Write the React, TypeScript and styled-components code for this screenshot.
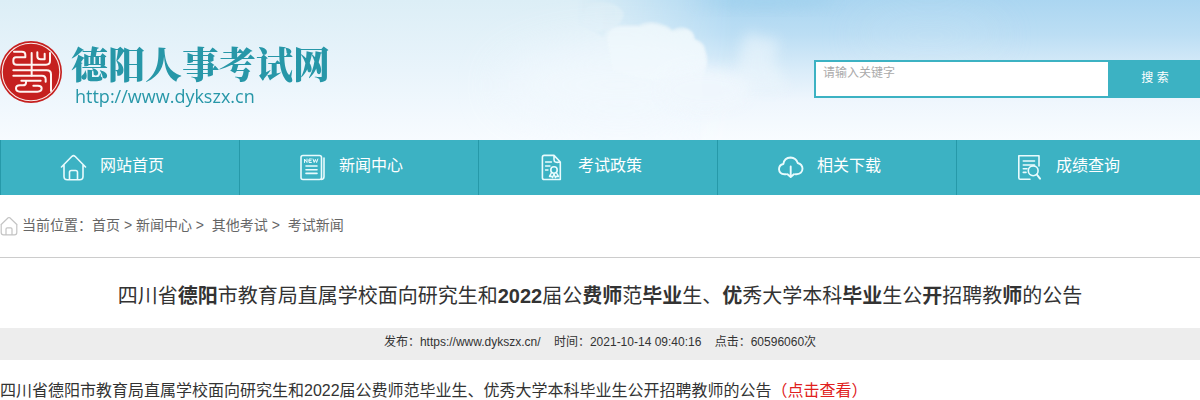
import React from "react";
import styled, { createGlobalStyle } from "styled-components";

const teal = "#3cb2c3";

const GlobalStyle = createGlobalStyle`
  *, *::before, *::after { box-sizing: border-box; }
  body {
    margin: 0;
    background: #fff;
    color: #333;
    font-family: "Liberation Sans", "Noto Sans CJK SC", sans-serif;
    font-size: 12px;
  }
  a { color: inherit; text-decoration: none; }
`;

const Header = styled.header`
  position: relative;
  display: flex;
  justify-content: space-between;
  align-items: flex-start;
  height: 140px;
  overflow: hidden;
  background: #eef6fc;
`;

const SkyArt = styled.svg`
  position: absolute;
  inset: 0;
  width: 100%;
  height: 100%;
`;

const Brand = styled.a`
  position: relative;
  display: flex;
  align-items: flex-start;
  gap: 8px;
  padding-top: 40px;
  color: #2797a8;
`;

const BrandText = styled.span`
  display: flex;
  flex-direction: column;
  padding-top: 1px;
`;

const BrandName = styled.strong`
  font-family: "Noto Serif CJK SC", "Noto Sans CJK SC", serif;
  font-size: 37px;
  font-weight: 900;
  line-height: 44px;
  white-space: nowrap;
`;

const BrandUrl = styled.span`
  padding-left: 4px;
  font-family: "Open Sans", "Noto Sans", sans-serif;
  font-size: 18px;
  line-height: 22px;
`;

const SearchForm = styled.form`
  position: relative;
  display: flex;
  width: 386px;
  height: 38px;
  margin-top: 60px;
  border: 2px solid ${teal};
  border-right: 0;
`;

const SearchInput = styled.input`
  flex: 1;
  min-width: 0;
  border: 0;
  border-radius: 0;
  outline: 0;
  padding: 0 7px 12px;
  background: #fff;
  font: 12px "Liberation Sans", "Noto Sans CJK SC", sans-serif;
  &::placeholder { color: #aaa; opacity: 1; }
`;

const SearchButton = styled.button`
  width: 92px;
  border: 0;
  padding: 0 0 6px 2px;
  background: ${teal};
  color: #fff;
  font: 12px "Liberation Sans", "Noto Sans CJK SC", sans-serif;
`;

const Nav = styled.nav`
  display: grid;
  grid-template-columns: repeat(5, 1fr);
  height: 55px;
  padding-right: 5px;
  background: ${teal};
`;

const NavLink = styled.a`
  display: flex;
  align-items: center;
  gap: 13px;
  padding-left: 59px;
  border-left: 1px solid #2699a9;
  color: #fff;
  font-size: 16px;
`;

const NavIcon = styled.svg`
  flex: none;
  width: 27px;
  height: 27px;
  fill: none;
  stroke: #e9fbfd;
  stroke-width: 1.6;
  stroke-linecap: round;
  stroke-linejoin: round;
`;

const NavLabel = styled.span`
  line-height: 24px;
  padding-bottom: 4px;
`;

const Breadcrumb = styled.nav`
  display: flex;
  align-items: center;
  gap: 4px;
  height: 63px;
  border-bottom: 1px solid #ccc;
  color: #666;
  font-size: 14px;
`;

const CrumbIcon = styled.svg`
  flex: none;
  width: 18px;
  height: 20px;
  fill: none;
  stroke: #c4c4c4;
  stroke-width: 1.2;
  stroke-linejoin: round;
`;

const CrumbTrail = styled.span`
  padding-bottom: 5px;
`;

const Title = styled.h1`
  margin: 0;
  padding: 21px 0 15px;
  font-size: 20px;
  font-weight: 400;
  line-height: 34px;
  text-align: center;
`;

const Meta = styled.p`
  margin: 0;
  height: 32px;
  background: #ededed;
  line-height: 28px;
  text-align: center;
`;

const Body = styled.p`
  margin: 0;
  padding-top: 19px;
  font-size: 16px;
  line-height: 24px;
`;

const MoreLink = styled.a`
  && { color: #e02020; }
`;

function Sky() {
  return (
    <SkyArt viewBox="0 0 1200 140" preserveAspectRatio="none" aria-hidden="true">
      <defs>
        <linearGradient id="base" x1="0" y1="0" x2="0" y2="1">
          <stop offset="0" stopColor="#dceef6" />
          <stop offset="0.5" stopColor="#e9f4fb" />
          <stop offset="1" stopColor="#f7fbff" />
        </linearGradient>
        <linearGradient id="blue" x1="0" y1="0" x2="0" y2="1">
          <stop offset="0" stopColor="#abd6f1" />
          <stop offset="0.25" stopColor="#bcdef4" />
          <stop offset="0.5" stopColor="#d9ecf9" />
          <stop offset="0.72" stopColor="#eff6fd" />
          <stop offset="1" stopColor="#f8fcff" />
        </linearGradient>
        <linearGradient id="fade" x1="0" y1="0" x2="1" y2="0">
          <stop offset="0.48" stopColor="#000" />
          <stop offset="0.61" stopColor="#fff" />
        </linearGradient>
        <filter id="soft" x="-40%" y="-40%" width="180%" height="180%"><feGaussianBlur stdDeviation="7" /></filter>
        <filter id="haze" x="-60%" y="-60%" width="220%" height="220%"><feGaussianBlur stdDeviation="22" /></filter>
        <filter id="edge" x="-10%" y="-10%" width="120%" height="120%"><feGaussianBlur stdDeviation="1.2" /></filter>
        <mask id="openSky">
          <rect width="1200" height="140" fill="url(#fade)" />
          <path d="M520 20Q570 14 603 37Q606 26 618 25Q630 25 639 25Q644 22 651 22Q658 22 664 25Q669 26 672 30Q679 26 686 28Q694 30 695 39Q705 42 706 52Q710 64 703 76L700 160H480Z" fill="#000" filter="url(#edge)" />
          <path d="M586 8Q592 1 606 3Q620 4 624 14Q622 24 612 28Q594 36 582 24Z" fill="#000" opacity="0.75" filter="url(#edge)" />
        </mask>
      </defs>
      <rect width="1200" height="140" fill="url(#base)" />
      <ellipse cx="620" cy="85" rx="120" ry="40" fill="#f3f9fe" opacity="0.7" filter="url(#haze)" />
      <g mask="url(#openSky)">
        <rect width="1200" height="140" fill="url(#blue)" />
        <ellipse cx="765" cy="0" rx="70" ry="9" fill="#9ccfec" opacity="0.6" filter="url(#soft)" />
      </g>
      <path d="M607 40Q608 28 618 27H640L651 24 664 27 672 32 686 30Q693 32 694 40Q703 44 704 52Q707 66 700 72Q655 88 612 70Z" fill="#f2f9fd" opacity="0.55" filter="url(#edge)" />
      <ellipse cx="705" cy="90" rx="46" ry="22" fill="#f0f7fd" opacity="0.9" filter="url(#soft)" />
      <path d="M742 44Q747 28 756 34Q764 42 776 36Q781 50 773 60Q780 74 790 90H732Q738 66 742 44Z" fill="#edf6fc" opacity="0.6" filter="url(#soft)" />
      <ellipse cx="930" cy="36" rx="75" ry="24" fill="#d6ebf8" opacity="0.2" filter="url(#haze)" />
    </SkyArt>
  );
}

function Seal() {
  return (
    <svg width="63" height="64" viewBox="0 0 63 64" aria-hidden="true">
      <circle cx="31" cy="32" r="31" fill="#c5201f" />
      <circle cx="31" cy="32" r="28.8" fill="none" stroke="#fbeae8" strokeWidth="1.1" />
      <g transform="translate(0 -9) scale(0.3333)" fill="none" stroke="#fff4f2" strokeWidth="6" strokeLinecap="round" strokeLinejoin="round">
        <path d="M42 62H66Q76 62 76 71V79H48Q40 79 40 88V92Q40 101 50 101H138Q150 101 150 90V66" />
        <path d="M95 66V134M112 64V76Q112 85 122 85H134V68" />
        <path d="M40 118H140Q153 118 153 130V180" />
        <path d="M40 134H126Q137 134 137 145V152" />
        <path d="M64 149H122M78 149V155Q78 163 68 163H60Q48 163 48 172Q48 182 60 182H112Q125 182 125 172Q125 164 114 164H100" />
      </g>
    </svg>
  );
}

const icons = {
  home: <path d="M1.5 13 12 2.3Q13.5 1 15 2.3L25.5 13M4 11V22.5Q4 25.8 7.3 25.8H19.7Q23 25.8 23 22.5V11M9.5 25.5V18.3Q9.5 16.5 11.3 16.5H15.7Q17.5 16.5 17.5 18.3V25.5" />,
  news: (
    <>
      <rect x="2" y="1.5" width="20.5" height="24" rx="2" />
      <path d="M25 4V22.5Q25 25.5 22 25.5M7 12H18M7 15.7H18M7 19.4H18" />
      <path strokeWidth="1" d="M5.5 8.5V5L8 8.5V5M12.4 5H10V8.5H12.4M10 6.7H12M14 5 15.2 8.5 16.4 5.4 17.6 8.5 18.8 5" />
    </>
  ),
  policy: (
    <>
      <path d="M22.3 8V25.5H6.2Q4.4 25.5 4.4 23.7V3.2Q4.4 1.4 6.2 1.4H16L22.3 8Q16 9.5 16 5.5V2" />
      <path strokeWidth="1.3" d="M7.5 8H13.5M7.5 12H12M7.5 16H10" />
      <circle cx="16" cy="16" r="3.2" />
      <path strokeWidth="1.5" d="M13.6 18.5 11.5 22.4 13.5 22.2 14.6 23.6 16 20 17.4 23.6 18.5 22.2 20.5 22.4 18.3 18.5" />
    </>
  ),
  download: (
    <path strokeWidth="1.9" d="M9 20.3H7.5Q2.3 19.8 2 15.2Q2 11 6.4 10Q7.2 3.8 13.6 3.5Q19 3.8 20.7 9Q25.5 10.4 25.5 14.8Q25.2 20 19.5 20.3H18.5M13.7 12.5V22.5M10.5 20.2 13.7 23 16.9 20.2" />
  ),
  results: (
    <>
      <path d="M14 25.3H4.2Q2.8 25.3 2.8 23.8V1.8H23V12" />
      <path d="M7.3 7H18.5M7.3 11H18.5M7.3 14.8H11M7.3 18.4H10" />
      <circle cx="17.2" cy="16.8" r="4.9" />
      <path strokeWidth="2" d="M20.8 20.5 24 24.7" />
    </>
  ),
};

const navItems: { label: string; icon: keyof typeof icons }[] = [
  { label: "网站首页", icon: "home" },
  { label: "新闻中心", icon: "news" },
  { label: "考试政策", icon: "policy" },
  { label: "相关下载", icon: "download" },
  { label: "成绩查询", icon: "results" },
];

export default function App() {
  return (
    <>
      <GlobalStyle />
      <Header>
        <Sky />
        <Brand href="#">
          <Seal />
          <BrandText>
            <BrandName>德阳人事考试网</BrandName>
            <BrandUrl>http://www.dykszx.cn</BrandUrl>
          </BrandText>
        </Brand>
        <SearchForm onSubmit={(e) => e.preventDefault()}>
          <SearchInput type="text" placeholder="请输入关键字" aria-label="请输入关键字" />
          <SearchButton type="submit">搜 索</SearchButton>
        </SearchForm>
      </Header>
      <Nav>
        {navItems.map((item) => (
          <NavLink href="#" key={item.label}>
            <NavIcon viewBox="0 0 27 27" aria-hidden="true">{icons[item.icon]}</NavIcon>
            <NavLabel>{item.label}</NavLabel>
          </NavLink>
        ))}
      </Nav>
      <Breadcrumb>
        <CrumbIcon viewBox="0 0 18 20" aria-hidden="true">
          <path d="M.7 9 8.2 1.8Q9 1.2 9.8 1.8L17.3 9M1.2 8.8V16.5Q1.2 18.8 3.5 18.8H14.5Q16.8 18.8 16.8 16.5V8.8M6 18.5V13Q6 11.8 7.2 11.8H10.8Q12 11.8 12 13V18.5" />
        </CrumbIcon>
        <CrumbTrail>
          当前位置：<a href="#">首页</a> &gt; <a href="#">新闻中心</a> &gt;&nbsp; <a href="#">其他考试</a> &gt;&nbsp; <a href="#">考试新闻</a>
        </CrumbTrail>
      </Breadcrumb>
      <main>
        <Title>
          四川省<b>德阳</b>市教育局直属学校面向研究生和<b>2022</b>届公<b>费师</b>范<b>毕业</b>生、<b>优</b>秀大学本科<b>毕业</b>生公<b>开</b>招聘教<b>师</b>的公告
        </Title>
        <Meta>
          发布：https://www.dykszx.cn/&nbsp;&nbsp;&nbsp; 时间：2021-10-14 09:40:16&nbsp;&nbsp;&nbsp; 点击：60596060次
        </Meta>
        <Body>
          四川省德阳市教育局直属学校面向研究生和2022届公费师范毕业生、优秀大学本科毕业生公开招聘教师的公告
          <MoreLink href="#">（点击查看）</MoreLink>
        </Body>
      </main>
    </>
  );
}
